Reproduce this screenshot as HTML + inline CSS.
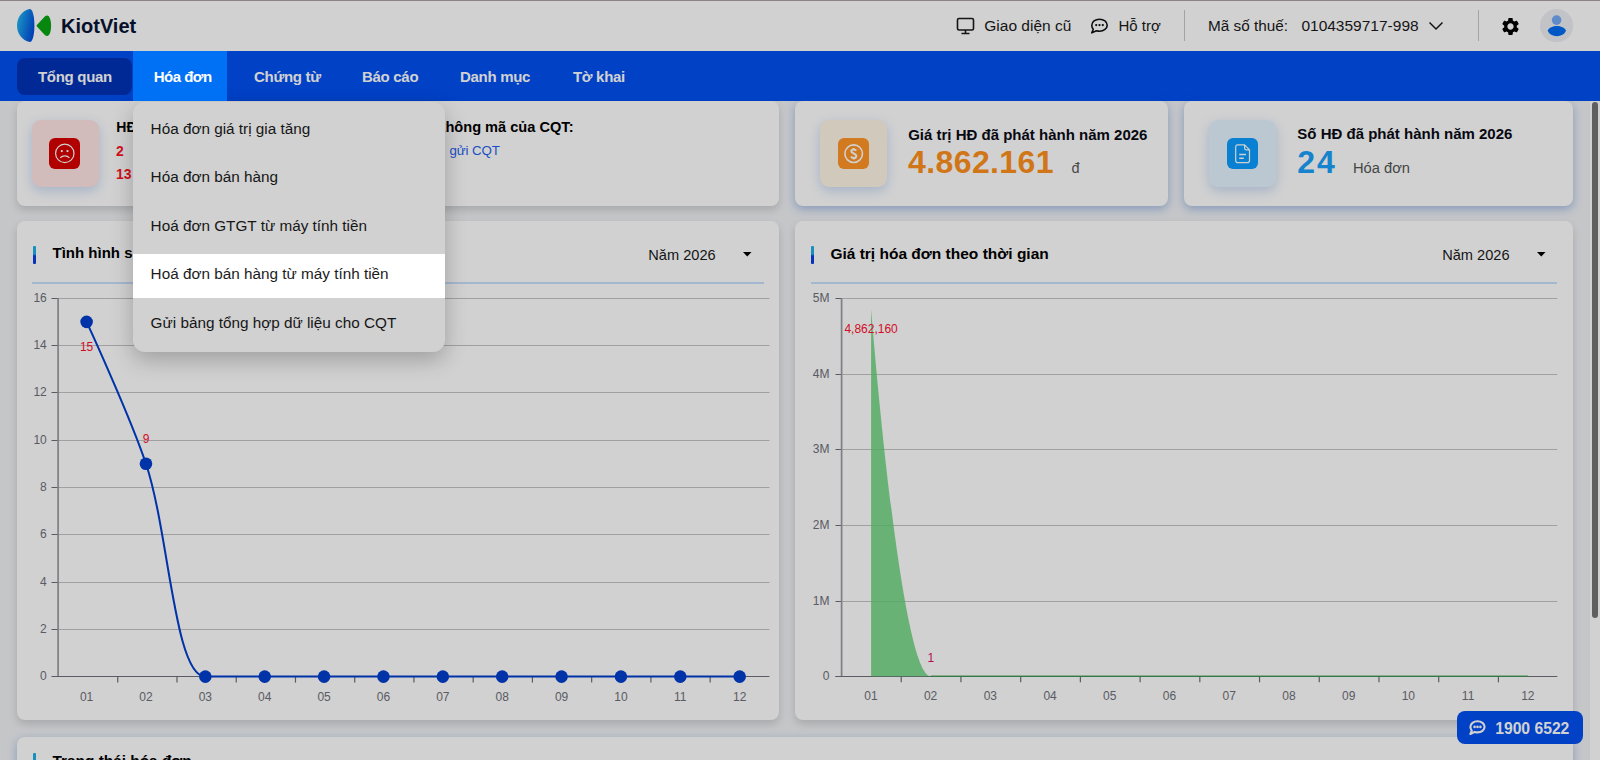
<!DOCTYPE html>
<html lang="vi"><head><meta charset="utf-8"><title>KiotViet</title><style>
*{margin:0;padding:0;box-sizing:border-box}
html,body{width:1600px;height:760px;overflow:hidden;background:#f0f2f5;font-family:"Liberation Sans",sans-serif}
.t{position:absolute;white-space:nowrap}
.ab{position:absolute}
#hdr{position:absolute;left:0;top:0;width:1600px;height:51px;background:#fff}
#nav{position:absolute;left:0;top:51px;width:1600px;height:50px;background:#0050f2}
#content{position:absolute;left:0;top:0;width:1600px;height:760px}
.card{position:absolute;background:#fff;border-radius:8px;box-shadow:0 4px 9px rgba(0,0,0,0.15)}
.blu{box-shadow:0 3px 10px rgba(40,100,200,0.38)}
.ibox{position:absolute;width:66.5px;height:66.5px;border-radius:9px;box-shadow:0 4px 12px rgba(20,90,200,0.22)}
.iin{position:absolute;width:31.4px;height:31.4px;border-radius:6px}
.bar{position:absolute;width:3.2px;height:18px;border-radius:1px;background:linear-gradient(#1cb0ea 0,#1cb0ea 45%,#0a3ee0 55%,#0a3ee0 100%)}
#dd{position:absolute;left:133px;top:102px;width:312px;height:250px;background:#fff;border-radius:12px;box-shadow:0 8px 22px rgba(0,0,0,0.24)}
#ov{position:absolute;left:0;top:0;width:1600px;height:760px;background:rgba(0,0,0,0.18);z-index:1000}
.hi{position:absolute;z-index:1001}
</style></head>
<body>
<div id="hdr"></div>
<svg class="ab" style="left:0;top:0" width="60" height="50" viewBox="0 0 60 50">
<defs><linearGradient id="lg1" x1="0" y1="0.3" x2="1" y2="0.7"><stop offset="0" stop-color="#22b6f0"/><stop offset="1" stop-color="#0048dc"/></linearGradient></defs>
<path d="M29.8,9 C32.6,9 34.4,16.5 34.4,25.5 C34.4,34.5 32.6,42.1 29.8,42.1 C22.2,40.6 17,33.8 17,25.5 C17,17.3 22.2,10.5 29.8,9 Z" fill="url(#lg1)"/>
<path d="M37.2,25.7 L45.3,17 Q47,15.4 48.4,16.8 Q50.4,19.5 50.4,25.7 Q50.4,31.9 48.4,34.6 Q47,36 45.3,34.4 Z" fill="#0aa514" stroke="#0aa514" stroke-width="1.4" stroke-linejoin="round"/>
</svg>
<div class="t" style="left:61.00px;top:14.07px;font-size:20px;line-height:24px;font-weight:bold;color:#081434;letter-spacing:0px">KiotViet</div>
<svg class="ab" style="left:956px;top:17px" width="19" height="18" viewBox="0 0 19 18" fill="none" stroke="#1a1a1a" stroke-width="1.6">
<rect x="1.5" y="1.5" width="16" height="11.5" rx="1.5"/><path d="M9.5,13 V16.5 M5.5,16.5 H13.5"/></svg>
<div class="t" style="left:984.30px;top:16.43px;font-size:15.5px;line-height:19px;color:#1a1a1a">Giao diện cũ</div>
<svg class="ab" style="left:1090px;top:17px" width="20" height="18" viewBox="0 0 20 18" fill="none" stroke="#111" stroke-width="1.6">
<path d="M9.5,2.2 C13.8,2.2 17.2,4.8 17.2,8.2 C17.2,11.6 13.8,14.2 9.5,14.2 C8.4,14.2 7.4,14 6.4,13.7 L1.8,15.9 L3.3,12.3 C2.3,11.2 1.8,9.8 1.8,8.2 C1.8,4.8 5.2,2.2 9.5,2.2 Z" stroke-linejoin="round"/>
<circle cx="6.2" cy="8.1" r="1.15" fill="#111" stroke="none"/><circle cx="9.5" cy="8.1" r="1.15" fill="#111" stroke="none"/><circle cx="12.8" cy="8.1" r="1.15" fill="#111" stroke="none"/>
</svg>
<div class="t" style="left:1118.40px;top:17.10px;font-size:15px;line-height:18px;color:#1a1a1a">Hỗ trợ</div>
<div class="ab" style="left:1184px;top:10px;width:1px;height:31px;background:#c8c8c8"></div>
<div class="t" style="left:1208.00px;top:17.00px;font-size:15.3px;line-height:18px;color:#1a1a1a">Mã số thuế:</div>
<div class="t" style="left:1301.40px;top:16.43px;font-size:15.5px;line-height:19px;color:#1a1a1a">0104359717-998</div>
<svg class="ab" style="left:1428px;top:20px" width="16" height="12" viewBox="0 0 16 12" fill="none" stroke="#1a1a1a" stroke-width="1.5">
<path d="M1.5,2.5 L8,9 L14.5,2.5"/></svg>
<div class="ab" style="left:1478px;top:10px;width:1px;height:31px;background:#c8c8c8"></div>
<svg class="ab" style="left:1500px;top:16px" width="21" height="21" viewBox="0 0 24 24">
<path fill="#000" d="M19.14,12.94c0.04-0.3,0.06-0.61,0.06-0.94c0-0.32-0.02-0.64-0.07-0.94l2.03-1.58c0.18-0.14,0.23-0.41,0.12-0.61 l-1.92-3.32c-0.12-0.22-0.37-0.29-0.59-0.22l-2.39,0.96c-0.5-0.38-1.03-0.7-1.62-0.94L14.4,2.81c-0.04-0.24-0.24-0.41-0.48-0.41 h-3.84c-0.24,0-0.43,0.17-0.47,0.41L9.25,5.35C8.66,5.59,8.12,5.92,7.63,6.29L5.24,5.33c-0.22-0.08-0.47,0-0.59,0.22L2.74,8.87 C2.62,9.08,2.66,9.34,2.86,9.48l2.03,1.58C4.84,11.36,4.8,11.69,4.8,12s0.02,0.64,0.07,0.94l-2.03,1.58 c-0.18,0.14-0.23,0.41-0.12,0.61l1.92,3.32c0.12,0.22,0.37,0.29,0.59,0.22l2.39-0.96c0.5,0.38,1.03,0.7,1.62,0.94l0.36,2.54 c0.05,0.24,0.24,0.41,0.48,0.41h3.84c0.24,0,0.44-0.17,0.47-0.41l0.36-2.54c0.59-0.24,1.13-0.56,1.62-0.94l2.39,0.96 c0.22,0.08,0.47,0,0.59-0.22l1.92-3.32c0.12-0.22,0.07-0.47-0.12-0.61L19.14,12.94z M12,15.6c-1.98,0-3.6-1.62-3.6-3.6 s1.62-3.6,3.6-3.6s3.6,1.62,3.6,3.6S13.98,15.6,12,15.6z"/></svg>
<svg class="ab" style="left:1540px;top:9px" width="34" height="34" viewBox="0 0 34 34">
<circle cx="16.6" cy="16.7" r="16.6" fill="#eceef2"/>
<circle cx="16.6" cy="11.1" r="4.8" fill="#74aaf8"/>
<path d="M7.7,21.6 C10.5,15.4 23.2,15.4 26,21.6 C23.6,29 10.1,29 7.7,21.6 Z" fill="#006cf2"/>
</svg>
<div id="nav"></div>
<div class="ab" style="left:17px;top:58px;width:115px;height:37px;border-radius:8px;background:#0033b8"></div>
<div class="t" style="left:38.00px;top:67.80px;font-size:15px;line-height:18px;font-weight:bold;color:#fff;letter-spacing:-0.3px">Tổng quan</div>
<div class="t" style="left:254.00px;top:67.80px;font-size:15px;line-height:18px;font-weight:bold;color:#fff;letter-spacing:-0.3px">Chứng từ</div>
<div class="t" style="left:362.00px;top:67.80px;font-size:15px;line-height:18px;font-weight:bold;color:#fff;letter-spacing:-0.3px">Báo cáo</div>
<div class="t" style="left:460.00px;top:67.80px;font-size:15px;line-height:18px;font-weight:bold;color:#fff;letter-spacing:-0.3px">Danh mục</div>
<div class="t" style="left:573.00px;top:67.80px;font-size:15px;line-height:18px;font-weight:bold;color:#fff;letter-spacing:-0.3px">Tờ khai</div>
<div id="content">
<div class="card" style="left:17px;top:101px;width:762px;height:105px"></div>
<div class="ibox" style="left:32px;top:120px;background:#ffe4e4"></div>
<div class="iin" style="left:49px;top:137.5px;background:#d70000"></div>
<svg class="ab" style="left:0;top:0" width="100" height="200" viewBox="0 0 100 200" fill="none" stroke="#fff" stroke-width="1.2">
<circle cx="64.8" cy="153.4" r="9.2"/><path d="M60.2,157.9 C62.4,155.3 67.2,155.3 69.4,157.9"/>
<circle cx="61.8" cy="151.1" r="1.15" fill="#fff" stroke="none"/><circle cx="67.5" cy="151.1" r="1.15" fill="#fff" stroke="none"/></svg>
<div class="t" style="left:116.30px;top:118.75px;font-size:14px;line-height:17px;font-weight:bold;color:#000">HĐ có mã chưa gửi CQT:</div>
<div class="t" style="left:116.00px;top:142.95px;font-size:14px;line-height:17px;font-weight:bold;color:#ff1424">2</div>
<div class="t" style="left:116.00px;top:165.65px;font-size:14px;line-height:17px;font-weight:bold;color:#ff1424">13</div>
<div class="t" style="right:1026.50px;top:117.94px;font-size:14.6px;line-height:18px;text-align:right;font-weight:bold;color:#000">HĐ không mã của CQT:</div>
<div class="t" style="left:449.50px;top:143.39px;font-size:13.3px;line-height:16px;color:#1f5ff0;letter-spacing:-0.1px">gửi CQT</div>
<div class="card blu" style="left:795px;top:101px;width:373px;height:105px"></div>
<div class="ibox" style="left:820.3px;top:120px;background:#fff6e6"></div>
<div class="iin" style="left:837.6px;top:137.6px;background:#ff9527"></div>
<svg class="ab" style="left:837.6px;top:137.6px" width="31.4" height="31.4" viewBox="0 0 31.4 31.4" fill="none" stroke="#fff" stroke-width="1.2">
<circle cx="15.7" cy="15.7" r="8.8" stroke-width="1.6"/>
<path d="M18.2,12.6 C17.6,11.7 16.8,11.4 15.7,11.4 C14.2,11.4 13.3,12.2 13.3,13.3 C13.3,15.9 18.3,15 18.3,17.9 C18.3,19.1 17.2,20 15.7,20 C14.4,20 13.5,19.5 13,18.6 M15.7,10 V11.4 M15.7,20 V21.4" stroke-width="2"/>
</svg>
<div class="t" style="left:908.20px;top:125.50px;font-size:15px;line-height:18px;font-weight:bold;color:#0a0a14">Giá trị HĐ đã phát hành năm 2026</div>
<div class="t" style="left:908.00px;top:142.81px;font-size:32px;line-height:38px;font-weight:bold;color:#ff901c;letter-spacing:0.4px">4.862.161</div>
<div class="t" style="left:1071.40px;top:159.68px;font-size:14.5px;line-height:17px;color:#5a5a5a">đ</div>
<div class="card blu" style="left:1184px;top:101px;width:389px;height:105px"></div>
<div class="ibox" style="left:1209px;top:120px;background:#e6f5ff"></div>
<div class="iin" style="left:1226.8px;top:137.5px;background:#0b9dff"></div>
<svg class="ab" style="left:1226.8px;top:137.5px" width="31.4" height="31.4" viewBox="0 0 31.4 31.4" fill="none" stroke="#fff" stroke-width="1.2" stroke-linejoin="round">
<path d="M10.6,6.9 H17.6 L22.5,11.9 V22.4 C22.5,23.9 21.8,24.6 20.3,24.6 H10.9 C9.4,24.6 8.7,23.9 8.7,22.4 V9.1 C8.7,7.6 9.4,6.9 10.6,6.9 Z M17.6,6.9 V10.2 C17.6,11.3 18.2,11.9 19.3,11.9 H22.5"/>
<path d="M12.2,16.5 H19 M12.2,20.3 H16.8" stroke-width="1.5"/>
</svg>
<div class="t" style="left:1297.30px;top:125.40px;font-size:15px;line-height:18px;font-weight:bold;color:#0a0a14">Số HĐ đã phát hành năm 2026</div>
<div class="t" style="left:1297.20px;top:142.91px;font-size:32px;line-height:38px;font-weight:bold;color:#1ca0fa;letter-spacing:2px">24</div>
<div class="t" style="left:1353.00px;top:159.11px;font-size:14.7px;line-height:18px;color:#555">Hóa đơn</div>
<div class="card" style="left:17px;top:221px;width:762px;height:499px"></div>
<div class="card" style="left:795px;top:221px;width:778px;height:499px"></div>
<div class="card blu" style="left:17px;top:737px;width:1556px;height:300px"></div>
<div class="bar" style="left:33px;top:246px"></div>
<div class="bar" style="left:811px;top:246px"></div>
<div class="bar" style="left:33px;top:753px"></div>
<div class="t" style="left:52.50px;top:244.40px;font-size:15px;line-height:18px;font-weight:bold;color:#000">Tình hình sử dụng hóa đơn</div>
<div class="t" style="left:830.40px;top:243.73px;font-size:15.5px;line-height:19px;font-weight:bold;color:#000">Giá trị hóa đơn theo thời gian</div>
<div class="t" style="left:52.50px;top:752.16px;font-size:15.4px;line-height:18px;font-weight:bold;color:#000">Trạng thái hóa đơn</div>
<div class="t" style="left:648.30px;top:245.74px;font-size:14.6px;line-height:18px;color:#1a1a1a">Năm 2026</div>
<div class="t" style="left:1442.20px;top:245.74px;font-size:14.6px;line-height:18px;color:#1a1a1a">Năm 2026</div>
<svg class="ab" style="left:742.5px;top:251.5px" width="9" height="5" viewBox="0 0 9 5"><path d="M0,0 H8.5 L4.25,4.6 Z" fill="#000"/></svg>
<svg class="ab" style="left:1536.5px;top:251.5px" width="9" height="5" viewBox="0 0 9 5"><path d="M0,0 H8.5 L4.25,4.6 Z" fill="#000"/></svg>
<div class="ab" style="left:32px;top:282.2px;width:732px;height:1.4px;background:#c9e0ff"></div>
<div class="ab" style="left:811px;top:282.2px;width:746px;height:1.4px;background:#c9e0ff"></div>
<svg class="ab" style="left:0;top:0;font-family:&quot;Liberation Sans&quot;,sans-serif" width="1600" height="760" viewBox="0 0 1600 760">
<line x1="51.5" y1="676.50" x2="58.5" y2="676.50" stroke="#6e7079" stroke-width="1"/>
<text x="46.8" y="680.10" text-anchor="end" font-size="12" fill="#6e7079">0</text>
<line x1="58.5" y1="629.50" x2="769.4" y2="629.50" stroke="#c4c4c4" stroke-width="1"/>
<line x1="51.5" y1="629.50" x2="58.5" y2="629.50" stroke="#6e7079" stroke-width="1"/>
<text x="46.8" y="633.10" text-anchor="end" font-size="12" fill="#6e7079">2</text>
<line x1="58.5" y1="582.50" x2="769.4" y2="582.50" stroke="#c4c4c4" stroke-width="1"/>
<line x1="51.5" y1="582.50" x2="58.5" y2="582.50" stroke="#6e7079" stroke-width="1"/>
<text x="46.8" y="586.10" text-anchor="end" font-size="12" fill="#6e7079">4</text>
<line x1="58.5" y1="534.50" x2="769.4" y2="534.50" stroke="#c4c4c4" stroke-width="1"/>
<line x1="51.5" y1="534.50" x2="58.5" y2="534.50" stroke="#6e7079" stroke-width="1"/>
<text x="46.8" y="538.10" text-anchor="end" font-size="12" fill="#6e7079">6</text>
<line x1="58.5" y1="487.50" x2="769.4" y2="487.50" stroke="#c4c4c4" stroke-width="1"/>
<line x1="51.5" y1="487.50" x2="58.5" y2="487.50" stroke="#6e7079" stroke-width="1"/>
<text x="46.8" y="491.10" text-anchor="end" font-size="12" fill="#6e7079">8</text>
<line x1="58.5" y1="440.50" x2="769.4" y2="440.50" stroke="#c4c4c4" stroke-width="1"/>
<line x1="51.5" y1="440.50" x2="58.5" y2="440.50" stroke="#6e7079" stroke-width="1"/>
<text x="46.8" y="444.10" text-anchor="end" font-size="12" fill="#6e7079">10</text>
<line x1="58.5" y1="392.50" x2="769.4" y2="392.50" stroke="#c4c4c4" stroke-width="1"/>
<line x1="51.5" y1="392.50" x2="58.5" y2="392.50" stroke="#6e7079" stroke-width="1"/>
<text x="46.8" y="396.10" text-anchor="end" font-size="12" fill="#6e7079">12</text>
<line x1="58.5" y1="345.50" x2="769.4" y2="345.50" stroke="#c4c4c4" stroke-width="1"/>
<line x1="51.5" y1="345.50" x2="58.5" y2="345.50" stroke="#6e7079" stroke-width="1"/>
<text x="46.8" y="349.10" text-anchor="end" font-size="12" fill="#6e7079">14</text>
<line x1="58.5" y1="298.50" x2="769.4" y2="298.50" stroke="#c4c4c4" stroke-width="1"/>
<line x1="51.5" y1="298.50" x2="58.5" y2="298.50" stroke="#6e7079" stroke-width="1"/>
<text x="46.8" y="302.10" text-anchor="end" font-size="12" fill="#6e7079">16</text>
<line x1="58.1" y1="298.2" x2="58.1" y2="676.6" stroke="#9a9ca2" stroke-width="1.7"/>
<line x1="52.5" y1="676.5" x2="769.4" y2="676.5" stroke="#6e7079" stroke-width="1.2"/>
<line x1="117.74" y1="676.6" x2="117.74" y2="682.6" stroke="#6e7079" stroke-width="1.2"/>
<line x1="176.98" y1="676.6" x2="176.98" y2="682.6" stroke="#6e7079" stroke-width="1.2"/>
<line x1="236.22" y1="676.6" x2="236.22" y2="682.6" stroke="#6e7079" stroke-width="1.2"/>
<line x1="295.47" y1="676.6" x2="295.47" y2="682.6" stroke="#6e7079" stroke-width="1.2"/>
<line x1="354.71" y1="676.6" x2="354.71" y2="682.6" stroke="#6e7079" stroke-width="1.2"/>
<line x1="413.95" y1="676.6" x2="413.95" y2="682.6" stroke="#6e7079" stroke-width="1.2"/>
<line x1="473.19" y1="676.6" x2="473.19" y2="682.6" stroke="#6e7079" stroke-width="1.2"/>
<line x1="532.43" y1="676.6" x2="532.43" y2="682.6" stroke="#6e7079" stroke-width="1.2"/>
<line x1="591.67" y1="676.6" x2="591.67" y2="682.6" stroke="#6e7079" stroke-width="1.2"/>
<line x1="650.92" y1="676.6" x2="650.92" y2="682.6" stroke="#6e7079" stroke-width="1.2"/>
<line x1="710.16" y1="676.6" x2="710.16" y2="682.6" stroke="#6e7079" stroke-width="1.2"/>
<text x="86.60" y="700.70" text-anchor="middle" font-size="12" fill="#6e7079">01</text>
<text x="145.97" y="700.70" text-anchor="middle" font-size="12" fill="#6e7079">02</text>
<text x="205.34" y="700.70" text-anchor="middle" font-size="12" fill="#6e7079">03</text>
<text x="264.71" y="700.70" text-anchor="middle" font-size="12" fill="#6e7079">04</text>
<text x="324.08" y="700.70" text-anchor="middle" font-size="12" fill="#6e7079">05</text>
<text x="383.45" y="700.70" text-anchor="middle" font-size="12" fill="#6e7079">06</text>
<text x="442.82" y="700.70" text-anchor="middle" font-size="12" fill="#6e7079">07</text>
<text x="502.19" y="700.70" text-anchor="middle" font-size="12" fill="#6e7079">08</text>
<text x="561.56" y="700.70" text-anchor="middle" font-size="12" fill="#6e7079">09</text>
<text x="620.93" y="700.70" text-anchor="middle" font-size="12" fill="#6e7079">10</text>
<text x="680.30" y="700.70" text-anchor="middle" font-size="12" fill="#6e7079">11</text>
<text x="739.67" y="700.70" text-anchor="middle" font-size="12" fill="#6e7079">12</text>
<path d="M86.60,321.85 C86.60,321.85 129.89,415.70 145.97,463.75 C169.07,532.77 174.45,676.60 205.34,676.60 C213.64,676.60 245.12,676.60 264.71,676.60 C284.30,676.60 304.49,676.60 324.08,676.60 C343.67,676.60 363.86,676.60 383.45,676.60 C403.04,676.60 423.23,676.60 442.82,676.60 C462.41,676.60 482.60,676.60 502.19,676.60 C521.78,676.60 541.97,676.60 561.56,676.60 C581.15,676.60 601.34,676.60 620.93,676.60 C640.52,676.60 660.71,676.60 680.30,676.60 C699.89,676.60 739.67,676.60 739.67,676.60" fill="none" stroke="#003ecd" stroke-width="2"/>
<circle cx="86.60" cy="321.85" r="6.3" fill="#003ecd"/>
<circle cx="145.97" cy="463.75" r="6.3" fill="#003ecd"/>
<circle cx="205.34" cy="676.60" r="6.3" fill="#003ecd"/>
<circle cx="264.71" cy="676.60" r="6.3" fill="#003ecd"/>
<circle cx="324.08" cy="676.60" r="6.3" fill="#003ecd"/>
<circle cx="383.45" cy="676.60" r="6.3" fill="#003ecd"/>
<circle cx="442.82" cy="676.60" r="6.3" fill="#003ecd"/>
<circle cx="502.19" cy="676.60" r="6.3" fill="#003ecd"/>
<circle cx="561.56" cy="676.60" r="6.3" fill="#003ecd"/>
<circle cx="620.93" cy="676.60" r="6.3" fill="#003ecd"/>
<circle cx="680.30" cy="676.60" r="6.3" fill="#003ecd"/>
<circle cx="739.67" cy="676.60" r="6.3" fill="#003ecd"/>
<text x="86.60" y="351.35" text-anchor="middle" font-size="12" fill="#ff1030">15</text>
<text x="145.97" y="442.75" text-anchor="middle" font-size="12" fill="#ff1030">9</text>
<line x1="835.5" y1="676.50" x2="841.5" y2="676.50" stroke="#6e7079" stroke-width="1"/>
<text x="829.5" y="680.10" text-anchor="end" font-size="12" fill="#6e7079">0</text>
<line x1="841.5" y1="601.50" x2="1557.3" y2="601.50" stroke="#c4c4c4" stroke-width="1"/>
<line x1="835.5" y1="601.50" x2="841.5" y2="601.50" stroke="#6e7079" stroke-width="1"/>
<text x="829.5" y="605.10" text-anchor="end" font-size="12" fill="#6e7079">1M</text>
<line x1="841.5" y1="525.50" x2="1557.3" y2="525.50" stroke="#c4c4c4" stroke-width="1"/>
<line x1="835.5" y1="525.50" x2="841.5" y2="525.50" stroke="#6e7079" stroke-width="1"/>
<text x="829.5" y="529.10" text-anchor="end" font-size="12" fill="#6e7079">2M</text>
<line x1="841.5" y1="449.50" x2="1557.3" y2="449.50" stroke="#c4c4c4" stroke-width="1"/>
<line x1="835.5" y1="449.50" x2="841.5" y2="449.50" stroke="#6e7079" stroke-width="1"/>
<text x="829.5" y="453.10" text-anchor="end" font-size="12" fill="#6e7079">3M</text>
<line x1="841.5" y1="374.50" x2="1557.3" y2="374.50" stroke="#c4c4c4" stroke-width="1"/>
<line x1="835.5" y1="374.50" x2="841.5" y2="374.50" stroke="#6e7079" stroke-width="1"/>
<text x="829.5" y="378.10" text-anchor="end" font-size="12" fill="#6e7079">4M</text>
<line x1="841.5" y1="298.50" x2="1557.3" y2="298.50" stroke="#c4c4c4" stroke-width="1"/>
<line x1="835.5" y1="298.50" x2="841.5" y2="298.50" stroke="#6e7079" stroke-width="1"/>
<text x="829.5" y="302.10" text-anchor="end" font-size="12" fill="#6e7079">5M</text>
<line x1="841.6" y1="298.2" x2="841.6" y2="676.3" stroke="#9a9ca2" stroke-width="1.7"/>
<line x1="835.5" y1="676.5" x2="1557.3" y2="676.5" stroke="#6e7079" stroke-width="1.2"/>
<line x1="901.22" y1="676.3" x2="901.22" y2="682.3" stroke="#6e7079" stroke-width="1.2"/>
<line x1="960.94" y1="676.3" x2="960.94" y2="682.3" stroke="#6e7079" stroke-width="1.2"/>
<line x1="1020.66" y1="676.3" x2="1020.66" y2="682.3" stroke="#6e7079" stroke-width="1.2"/>
<line x1="1080.38" y1="676.3" x2="1080.38" y2="682.3" stroke="#6e7079" stroke-width="1.2"/>
<line x1="1140.10" y1="676.3" x2="1140.10" y2="682.3" stroke="#6e7079" stroke-width="1.2"/>
<line x1="1199.82" y1="676.3" x2="1199.82" y2="682.3" stroke="#6e7079" stroke-width="1.2"/>
<line x1="1259.54" y1="676.3" x2="1259.54" y2="682.3" stroke="#6e7079" stroke-width="1.2"/>
<line x1="1319.26" y1="676.3" x2="1319.26" y2="682.3" stroke="#6e7079" stroke-width="1.2"/>
<line x1="1378.98" y1="676.3" x2="1378.98" y2="682.3" stroke="#6e7079" stroke-width="1.2"/>
<line x1="1438.70" y1="676.3" x2="1438.70" y2="682.3" stroke="#6e7079" stroke-width="1.2"/>
<line x1="1498.42" y1="676.3" x2="1498.42" y2="682.3" stroke="#6e7079" stroke-width="1.2"/>
<text x="870.90" y="700.40" text-anchor="middle" font-size="12" fill="#6e7079">01</text>
<text x="930.62" y="700.40" text-anchor="middle" font-size="12" fill="#6e7079">02</text>
<text x="990.34" y="700.40" text-anchor="middle" font-size="12" fill="#6e7079">03</text>
<text x="1050.06" y="700.40" text-anchor="middle" font-size="12" fill="#6e7079">04</text>
<text x="1109.78" y="700.40" text-anchor="middle" font-size="12" fill="#6e7079">05</text>
<text x="1169.50" y="700.40" text-anchor="middle" font-size="12" fill="#6e7079">06</text>
<text x="1229.22" y="700.40" text-anchor="middle" font-size="12" fill="#6e7079">07</text>
<text x="1288.94" y="700.40" text-anchor="middle" font-size="12" fill="#6e7079">08</text>
<text x="1348.66" y="700.40" text-anchor="middle" font-size="12" fill="#6e7079">09</text>
<text x="1408.38" y="700.40" text-anchor="middle" font-size="12" fill="#6e7079">10</text>
<text x="1468.10" y="700.40" text-anchor="middle" font-size="12" fill="#6e7079">11</text>
<text x="1527.82" y="700.40" text-anchor="middle" font-size="12" fill="#6e7079">12</text>
<path d="M871.10,308.62 C871.10,308.62 899.94,676.30 930.82,676.30 C935.77,676.30 972.62,676.30 990.54,676.30 C1008.46,676.30 1032.34,676.30 1050.26,676.30 C1068.18,676.30 1092.06,676.30 1109.98,676.30 C1127.90,676.30 1151.78,676.30 1169.70,676.30 C1187.62,676.30 1211.50,676.30 1229.42,676.30 C1247.34,676.30 1271.22,676.30 1289.14,676.30 C1307.06,676.30 1330.94,676.30 1348.86,676.30 C1366.78,676.30 1390.66,676.30 1408.58,676.30 C1426.50,676.30 1450.38,676.30 1468.30,676.30 C1486.22,676.30 1528.02,676.30 1528.02,676.30 L1528.02,676.3 L871.10,676.3 Z" fill="#5cd070" fill-opacity="0.78"/>
<line x1="930.82" y1="676.3" x2="1528.02" y2="676.3" stroke="#3c9a4c" stroke-opacity="0.85" stroke-width="1.5"/>
<text x="871.10" y="332.62" text-anchor="middle" font-size="12" fill="#ff1030">4,862,160</text>
<text x="930.82" y="662.30" text-anchor="middle" font-size="12" fill="#e0106a">1</text>
</svg>
<div class="ab" style="left:1457px;top:711px;width:126px;height:33px;border-radius:8px;background:#0050f2"></div>
<svg class="ab" style="left:1468px;top:719px" width="19" height="17" viewBox="0 0 19 17" fill="none" stroke="#fff" stroke-width="2.1">
<path d="M9.5,2.2 C13.4,2.2 16.6,4.6 16.6,7.8 C16.6,11 13.4,13.4 9.5,13.4 C8.5,13.4 7.6,13.2 6.7,12.9 L2.4,15 L3.8,11.6 C2.9,10.6 2.4,9.3 2.4,7.8 C2.4,4.6 5.6,2.2 9.5,2.2 Z" stroke-linejoin="round"/>
<circle cx="6.6" cy="7.9" r="1.3" fill="#fff" stroke="none"/><circle cx="9.5" cy="7.9" r="1.3" fill="#fff" stroke="none"/><circle cx="12.4" cy="7.9" r="1.3" fill="#fff" stroke="none"/>
</svg>
<div class="t" style="left:1495.20px;top:718.76px;font-size:15.7px;line-height:19px;font-weight:bold;color:#fff">1900 6522</div>
</div>
<div id="dd"></div>
<div class="t" style="left:150.60px;top:120.00px;font-size:15.3px;line-height:18px;color:#1c1c1c">Hóa đơn giá trị gia tăng</div>
<div class="t" style="left:150.60px;top:168.40px;font-size:15.3px;line-height:18px;color:#1c1c1c">Hóa đơn bán hàng</div>
<div class="t" style="left:150.60px;top:216.80px;font-size:15.3px;line-height:18px;color:#1c1c1c">Hoá đơn GTGT từ máy tính tiền</div>
<div class="t" style="left:150.60px;top:265.20px;font-size:15.3px;line-height:18px;color:#1c1c1c">Hoá đơn bán hàng từ máy tính tiền</div>
<div class="t" style="left:150.60px;top:313.60px;font-size:15.3px;line-height:18px;color:#1c1c1c">Gửi bảng tổng hợp dữ liệu cho CQT</div>
<div class="ab" style="left:1590px;top:101px;width:10px;height:659px;background:#fff"></div>
<div class="ab" style="left:1592px;top:102px;width:6px;height:516px;border-radius:3px;background:#757575"></div>
<div id="ov"></div>
<div class="hi" style="left:133px;top:51px;width:94px;height:50px;background:#0070f4"></div>
<div class="t" style="left:153.70px;top:67.80px;font-size:15px;line-height:18px;font-weight:bold;color:#fff;letter-spacing:-0.5px;z-index:1002">Hóa đơn</div>
<div class="hi" style="left:133px;top:254px;width:312px;height:43.6px;background:#fff"></div>
<div class="t" style="left:150.60px;top:265.20px;font-size:15.3px;line-height:18px;color:#1c1c1c;z-index:1002">Hoá đơn bán hàng từ máy tính tiền</div>
<div class="hi" style="left:0;top:0;width:1600px;height:1px;background:#8c8484"></div>
</body></html>
